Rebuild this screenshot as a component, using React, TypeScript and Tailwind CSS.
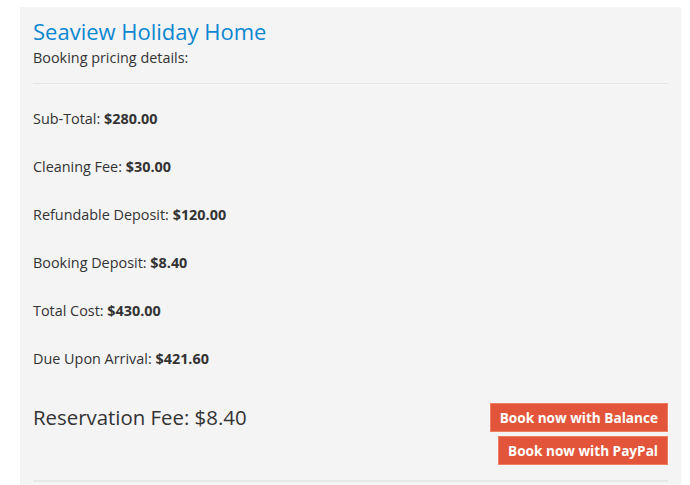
const rows: [string, string][] = [
  ["Sub-Total:", "$280.00"],
  ["Cleaning Fee:", "$30.00"],
  ["Refundable Deposit:", "$120.00"],
  ["Booking Deposit:", "$8.40"],
  ["Total Cost:", "$430.00"],
  ["Due Upon Arrival:", "$421.60"],
];

export default function App() {
  return (
    <div
      className="min-h-screen bg-white pt-[7px] pl-[20px] pr-[9px] text-[#333]"
      style={{ fontFamily: '"Open Sans", "Liberation Sans", sans-serif' }}
    >
      <div className="bg-[#f4f4f4] px-[13px] pt-[11px] pb-[14px]">
        <h1 className="text-[22px] leading-[1.2] text-[#0b86d1]">Seaview Holiday Home</h1>
        <p className="mt-[4px] text-[14.4px] leading-[20px]">Booking pricing details:</p>
        <div className="mt-[15px] h-px bg-[#e6e6e6]" />

        <div className="mt-[25px] flex flex-col gap-[28px]">
          {rows.map(([label, value]) => (
            <p key={label} className="text-[14.4px] leading-[20px]">
              {label} <strong className="font-bold">{value}</strong>
            </p>
          ))}
        </div>

        <div className="mt-[34px] flex items-start justify-between">
          <p className="text-[20.4px] leading-[28px]">Reservation Fee: $8.40</p>
          <div className="flex flex-col items-end gap-[4px]">
            <button className="h-[29px] border border-[#ee7d61] bg-[#e2553a] px-[9px] text-[13.6px] font-bold text-white">
              Book now with Balance
            </button>
            <button className="h-[29px] border border-[#ee7d61] bg-[#e2553a] px-[9px] text-[13.6px] font-bold text-white">
              Book now with PayPal
            </button>
          </div>
        </div>

        <div className="mt-[15px] h-[2px] bg-[#e8e8ea]" />
      </div>
    </div>
  );
}
